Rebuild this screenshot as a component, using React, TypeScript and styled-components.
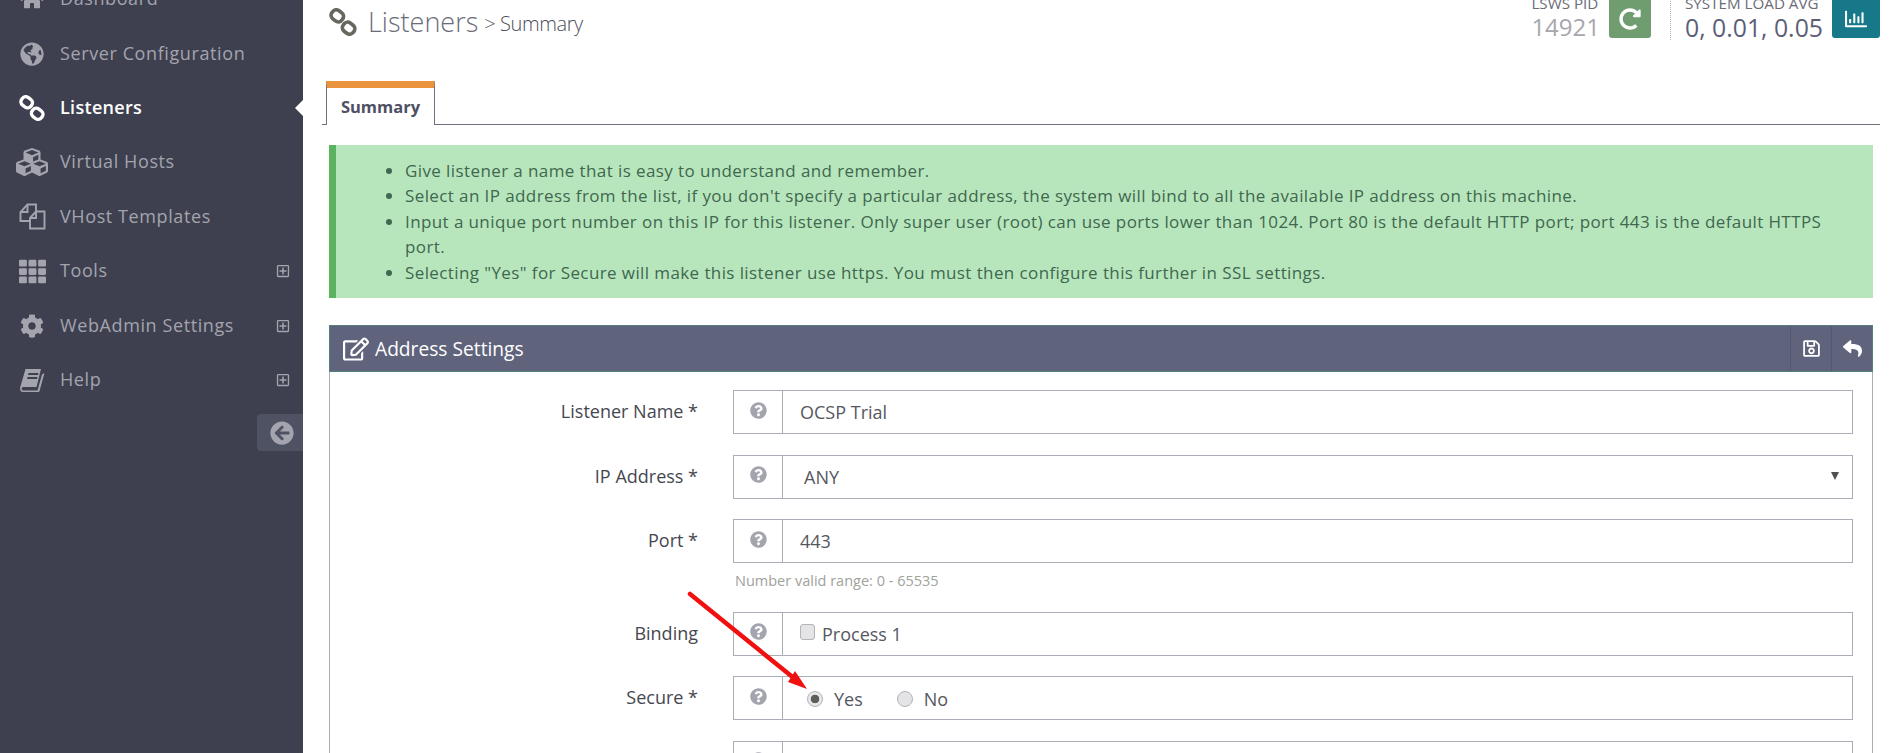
import React from 'react'
import styled, { createGlobalStyle } from 'styled-components'
import {
  FaHome,
  FaGlobeAmericas,
  FaCubes,
  FaTh,
  FaCog,
  FaRegPlusSquare,
  FaArrowCircleLeft,
  FaRedoAlt,
  FaRegChartBar,
  FaRegEdit,
  FaRegSave,
  FaReply,
  FaQuestionCircle,
} from 'react-icons/fa'

const GlobalStyle = createGlobalStyle`
  html, body {
    margin: 0;
    height: 100%;
    overflow: hidden;
    background: #fff;
    font-family: "Open Sans", "Liberation Sans", sans-serif;
  }
  * { box-sizing: border-box; }
`

const ChainIcon = ({ size = 26 }: { size?: number }) => (
  <svg width={size} height={size} viewBox="0 0 26 26" fill="none" stroke="currentColor" strokeWidth="3.4">
    <rect x="2" y="2.5" width="11.5" height="9.5" rx="4.2" transform="rotate(38 7.7 7.2)" />
    <rect x="12.5" y="14" width="11.5" height="9.5" rx="4.2" transform="rotate(38 18.2 18.7)" />
  </svg>
)

const FilesIcon = () => (
  <svg width="27" height="27" viewBox="0 0 27 27" fill="none" stroke="currentColor" strokeWidth="1.9">
    <path d="M11 18H1.5V9L8.5 1.5H17V8" />
    <path d="M8.5 1.5V9H1.5" />
    <path d="M11 15L17 8.5H25.5V25.5H11Z" />
    <path d="M17 8.5V15H11" />
  </svg>
)

const BookIcon = () => (
  <svg width="25" height="24" viewBox="0 0 25 24" fill="currentColor">
    <path
      fillRule="evenodd"
      d="M5.5 1H21L16.5 19H3.5C1 19 1 22.5 3.5 22.5H17.5L22 6.5L24.5 5L19.5 23C19.2 23.6 18.8 24 18 24H3C0.5 24 -0.5 21.5 0.3 19ZM8.5 5H18.5L18 7H8ZM7.5 9H17.5L17 11H7Z"
    />
  </svg>
)

const Page = styled.div`
  display: flex;
  height: 100vh;
  overflow: hidden;
  position: relative;
`

const Sidebar = styled.aside`
  flex: 0 0 303px;
  background: #3e404f;
  display: flex;
  flex-direction: column;
`

const NavList = styled.nav`
  margin-top: -28px;
  display: flex;
  flex-direction: column;
`

const NavRow = styled.div<{ $active?: boolean }>`
  position: relative;
  height: 54.4px;
  display: flex;
  align-items: center;
  padding-left: 15px;
  color: ${p => (p.$active ? '#fff' : '#a3a4ae')};
  font-size: 18px;
  letter-spacing: ${p => (p.$active ? 0.3 : 0.6)}px;
  font-weight: ${p => (p.$active ? 600 : 400)};
  ${p =>
    p.$active &&
    `&::after {
      content: '';
      position: absolute;
      right: 0;
      top: 19px;
      border: 8px solid transparent;
      border-right-color: #fff;
      border-left-width: 0;
    }`}
`

const NavIcon = styled.span`
  flex: 0 0 45px;
  min-width: 0;
  display: flex;
  align-items: center;
  justify-content: center;
  padding-right: 11px;
  font-size: 24px;
`

const NavLabel = styled.span`
  flex: 1;
  position: relative;
  top: -1px;
`

const Expand = styled.span`
  display: flex;
  margin-right: 13px;
  font-size: 14px;
`

const CollapseButton = styled.button`
  align-self: flex-end;
  margin-top: 7px;
  width: 46px;
  height: 37px;
  border: 0;
  padding: 0 0 0 3px;
  background: #4e5263;
  color: #a3a4ae;
  border-radius: 4px 0 0 4px;
  display: flex;
  align-items: center;
  justify-content: center;
  font-size: 24px;
`

const Main = styled.main`
  flex: 1;
  min-width: 0;
  padding-right: 9px;
  padding-left: 19px;
`

const TopBar = styled.header`
  height: 81px;
  display: flex;
  justify-content: space-between;
  align-items: flex-start;
`

const TitleBlock = styled.div`
  display: flex;
  align-items: center;
  margin: 5px 0 0 7px;
  color: #676a6c;
`

const TitleIcon = styled.span`
  display: flex;
  color: #66685f;
  margin-right: 11px;
`

const PageTitle = styled.h1`
  margin: 0;
  font-size: 27px;
  line-height: 34px;
  font-weight: 300;
  color: #6a6c78;
`

const SubTitle = styled.span`
  margin-left: 6px;
  font-size: 20px;
  font-weight: 300;
  letter-spacing: -0.4px;
  color: #4b4d57;
  position: relative;
  top: 1px;
`

const Stats = styled.div`
  display: flex;
  align-items: flex-start;
  margin-top: -6px;
`

const Stat = styled.div`
  display: flex;
  gap: 9px;
  align-items: flex-start;
`

const StatText = styled.div`
  display: flex;
  flex-direction: column;
`

const StatLabel = styled.span`
  font-size: 15.2px;
  line-height: 18px;
  color: #6b6d78;
`

const StatValue = styled.span<{ $muted?: boolean }>`
  font-size: ${p => (p.$muted ? 24 : 24.8)}px;
  line-height: 30px;
  color: ${p => (p.$muted ? '#a5a7ad' : '#5c5e76')};
`

const StatButton = styled.span<{ $color: string; $width: number }>`
  width: ${p => p.$width}px;
  height: 44px;
  border-radius: 0 0 3px 3px;
  background: ${p => p.$color};
  color: #fff;
  display: flex;
  align-items: center;
  justify-content: center;
  font-size: 22px;
  padding-top: 6px;
`

const StatDivider = styled.span`
  width: 0;
  height: 46px;
  margin: 0 14px 0 19px;
  border-left: 1px dotted #b5b6bc;
`

const TabBar = styled.div`
  height: 44px;
  border-bottom: 1px solid #6f7080;
  display: flex;
`

const Tab = styled.div`
  height: 44px;
  width: 109px;
  margin-left: 4px;
  background: #fff;
  border: 1px solid #6f7080;
  border-top: 7px solid #e9943c;
  border-bottom: 0;
  color: #4e5064;
  font-size: 16.5px;
  font-weight: 700;
  display: flex;
  align-items: center;
  justify-content: center;
`

const Hint = styled.div`
  margin: 20px 7px 0 7px;
  height: 153px;
  background: #b8e6bc;
  border-left: 7px solid #5cb35f;
  color: #40674f;
  font-size: 17px;
  letter-spacing: 0.4px;
  line-height: 25.4px;
`

const HintList = styled.ul`
  margin: 0;
  padding: 13px 40px 0 69px;
`

const Panel = styled.section`
  margin: 27px 7px 0 7px;
  border-right: 1px solid #acadb6;
  border-left: 1px solid #acadb6;
`

const PanelHead = styled.div`
  height: 47px;
  margin: 0 -1px;
  background: #5f637c;
  border: 1px solid #56807e;
  color: #fff;
  display: flex;
  align-items: center;
`

const PanelTitle = styled.div`
  flex: 1;
  display: flex;
  align-items: center;
  padding-left: 13px;
  font-size: 19.2px;
  gap: 6px;
`

const PanelAction = styled.span`
  width: 41px;
  height: 100%;
  border-left: 1px solid #54586f;
  display: flex;
  align-items: center;
  justify-content: center;
  font-size: 19px;
`

const PanelBody = styled.div`
  padding: 18px 19px 0 0;
`

const FormRow = styled.div`
  display: flex;
  align-items: flex-start;
  margin-bottom: 20.5px;
`

const RowLabel = styled.label`
  flex: 0 0 403px;
  padding: 9px 35px 0 0;
  text-align: right;
  font-size: 18px;
  line-height: 24px;
  color: #45474f;
`

const FieldColumn = styled.div`
  flex: 1;
  min-width: 0;
`

const Field = styled.div`
  height: 44px;
  border: 1px solid #acadb6;
  display: flex;
  align-items: stretch;
  position: relative;
`

const HelpCell = styled.span`
  flex: 0 0 49px;
  border-right: 1px solid #acadb6;
  color: #a3a4ae;
  display: flex;
  align-items: center;
  justify-content: center;
  font-size: 17px;
  padding-bottom: 4px;
`

const TextValue = styled.input`
  flex: 1;
  min-width: 0;
  border: 0;
  outline: 0;
  background: transparent;
  padding: 0 17px;
  font: 400 18px "Open Sans", "Liberation Sans", sans-serif;
  color: #55575f;
`

const SelectValue = styled.select`
  flex: 1;
  min-width: 0;
  border: 0;
  outline: 0;
  appearance: none;
  background: transparent;
  padding: 0 21px;
  font: 400 18px "Open Sans", "Liberation Sans", sans-serif;
  color: #55575f;
`

const SelectCaret = styled.span`
  position: absolute;
  right: 13px;
  top: 16px;
  border-style: solid;
  border-width: 8px 4px 0;
  border-color: #505050 transparent transparent;
  pointer-events: none;
`

const Options = styled.div<{ $inset: number }>`
  flex: 1;
  display: flex;
  align-items: center;
  padding: 1px 0 0 ${p => p.$inset}px;
  font-size: 18px;
  color: #55575f;
`

const Choice = styled.label`
  display: flex;
  align-items: center;
  margin-right: 34px;
  gap: 11px;
`

const CheckChoice = styled.label`
  display: flex;
  align-items: center;
  gap: 7px;
`

const CheckBox = styled.input`
  appearance: none;
  width: 15px;
  height: 16px;
  margin: -5px 0 0;
  background: #e4e4e6;
  border: 1px solid #b3b3b8;
  border-radius: 3px;
`

const Radio = styled.input`
  appearance: none;
  width: 16px;
  height: 16px;
  margin: 0;
  border: 1px solid #b3b3b8;
  border-radius: 50%;
  background: #e4e4e6;
  &:checked {
    background: radial-gradient(circle, #5c5e58 0 4px, #e8e8ea 4.6px);
  }
`

const FieldNote = styled.div`
  padding: 8px 0 0 2px;
  font-size: 14.5px;
  line-height: 20px;
  color: #a0a29c;
`

const Annotation = styled.svg`
  position: absolute;
  left: 680px;
  top: 585px;
  pointer-events: none;
`

const navItems = [
  { label: 'Dashboard', icon: <FaHome /> },
  { label: 'Server Configuration', icon: <FaGlobeAmericas /> },
  { label: 'Listeners', icon: <ChainIcon />, active: true },
  { label: 'Virtual Hosts', icon: <FaCubes style={{ fontSize: 32, flexShrink: 0 }} /> },
  { label: 'VHost Templates', icon: <FilesIcon /> },
  { label: 'Tools', icon: <FaTh style={{ fontSize: 27, flexShrink: 0 }} />, expand: true },
  { label: 'WebAdmin Settings', icon: <FaCog />, expand: true },
  { label: 'Help', icon: <BookIcon />, expand: true },
]

const hints = [
  'Give listener a name that is easy to understand and remember.',
  "Select an IP address from the list, if you don't specify a particular address, the system will bind to all the available IP address on this machine.",
  'Input a unique port number on this IP for this listener. Only super user (root) can use ports lower than 1024. Port 80 is the default HTTP port; port 443 is the default HTTPS port.',
  'Selecting "Yes" for Secure will make this listener use https. You must then configure this further in SSL settings.',
]

const Help = () => (
  <HelpCell>
    <FaQuestionCircle />
  </HelpCell>
)

export default function App() {
  return (
    <Page>
      <GlobalStyle />
      <Sidebar>
        <NavList>
          {navItems.map(item => (
            <NavRow key={item.label} $active={item.active}>
              <NavIcon>{item.icon}</NavIcon>
              <NavLabel>{item.label}</NavLabel>
              {item.expand && (
                <Expand>
                  <FaRegPlusSquare />
                </Expand>
              )}
            </NavRow>
          ))}
        </NavList>
        <CollapseButton>
          <FaArrowCircleLeft />
        </CollapseButton>
      </Sidebar>

      <Main>
        <TopBar>
          <TitleBlock>
            <TitleIcon>
              <ChainIcon size={28} />
            </TitleIcon>
            <PageTitle>Listeners</PageTitle>
            <SubTitle>&gt; Summary</SubTitle>
          </TitleBlock>
          <Stats>
            <Stat>
              <StatText>
                <StatLabel>LSWS PID</StatLabel>
                <StatValue $muted>14921</StatValue>
              </StatText>
              <StatButton $color="#6f9d6f" $width={42}>
                <FaRedoAlt />
              </StatButton>
            </Stat>
            <StatDivider />
            <Stat>
              <StatText>
                <StatLabel>SYSTEM LOAD AVG</StatLabel>
                <StatValue>0, 0.01, 0.05</StatValue>
              </StatText>
              <StatButton $color="#17788a" $width={48}>
                <FaRegChartBar />
              </StatButton>
            </Stat>
          </Stats>
        </TopBar>

        <TabBar>
          <Tab>Summary</Tab>
        </TabBar>

        <Hint>
          <HintList>
            {hints.map(text => (
              <li key={text}>{text}</li>
            ))}
          </HintList>
        </Hint>

        <Panel>
          <PanelHead>
            <PanelTitle>
              <FaRegEdit style={{ fontSize: 26 }} />
              Address Settings
            </PanelTitle>
            <PanelAction>
              <FaRegSave />
            </PanelAction>
            <PanelAction>
              <FaReply />
            </PanelAction>
          </PanelHead>
          <PanelBody>
            <FormRow>
              <RowLabel>Listener Name *</RowLabel>
              <FieldColumn>
                <Field>
                  <Help />
                  <TextValue readOnly value="OCSP Trial" />
                </Field>
              </FieldColumn>
            </FormRow>
            <FormRow>
              <RowLabel>IP Address *</RowLabel>
              <FieldColumn>
                <Field>
                  <Help />
                  <SelectValue defaultValue="ANY">
                    <option>ANY</option>
                  </SelectValue>
                  <SelectCaret />
                </Field>
              </FieldColumn>
            </FormRow>
            <FormRow>
              <RowLabel>Port *</RowLabel>
              <FieldColumn>
                <Field>
                  <Help />
                  <TextValue readOnly value="443" />
                </Field>
                <FieldNote>Number valid range: 0 - 65535</FieldNote>
              </FieldColumn>
            </FormRow>
            <FormRow>
              <RowLabel>Binding</RowLabel>
              <FieldColumn>
                <Field>
                  <Help />
                  <Options $inset={17}>
                    <CheckChoice>
                      <CheckBox type="checkbox" />
                      Process 1
                    </CheckChoice>
                  </Options>
                </Field>
              </FieldColumn>
            </FormRow>
            <FormRow>
              <RowLabel>Secure *</RowLabel>
              <FieldColumn>
                <Field>
                  <Help />
                  <Options $inset={24}>
                    <Choice>
                      <Radio type="radio" name="secure" defaultChecked />
                      Yes
                    </Choice>
                    <Choice>
                      <Radio type="radio" name="secure" />
                      No
                    </Choice>
                  </Options>
                </Field>
              </FieldColumn>
            </FormRow>
            <FormRow>
              <RowLabel />
              <FieldColumn>
                <Field>
                  <Help />
                </Field>
              </FieldColumn>
            </FormRow>
          </PanelBody>
        </Panel>
      </Main>

      <Annotation width="130" height="110" viewBox="0 0 130 110">
        <line x1="10" y1="9" x2="115" y2="94" stroke="#f01010" strokeWidth="4.5" strokeLinecap="round" />
        <path d="M127 104L108 97L115 86Z" fill="#f01010" />
      </Annotation>
    </Page>
  )
}
